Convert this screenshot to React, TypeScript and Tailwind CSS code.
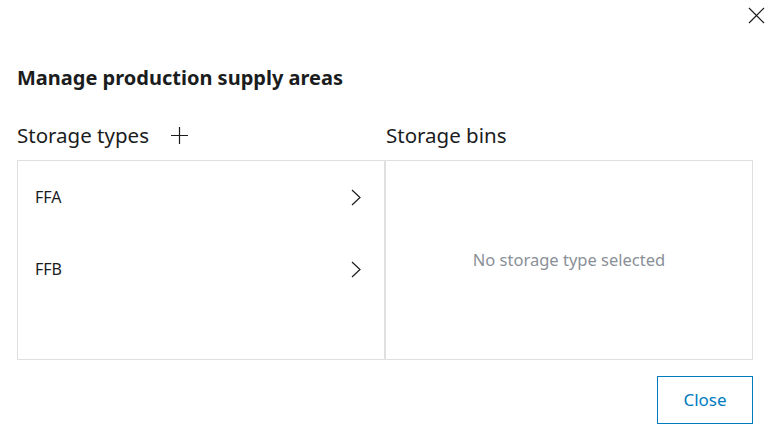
const storageTypes = ['FFA', 'FFB'];

/** Thin chevron used in the storage type rows. */
function Chevron() {
  return (
    <svg width="10" height="17" viewBox="0 0 10 17" fill="none" stroke="currentColor" strokeWidth="1.2">
      <path d="M1 1 L9 8.5 L1 16" />
    </svg>
  );
}

/** Dialog for managing production supply areas. */
export default function App() {
  return (
    <div
      className="relative w-[773px] h-[436px] bg-white px-[17px] text-[#1a1c1d]"
      style={{ fontFamily: '"Noto Sans", "Open Sans", sans-serif' }}
    >
      {/* Close icon */}
      <button className="absolute left-[748px] top-[7px] text-[#1a1c1d]" aria-label="Close dialog">
        <svg width="17" height="17" viewBox="0 0 17 17" fill="none" stroke="currentColor" strokeWidth="1.2">
          <path d="M1 1 L16 16 M16 1 L1 16" />
        </svg>
      </button>

      {/* Title */}
      <h1 className="pt-[64px] text-[20px] leading-[28px] font-bold">Manage production supply areas</h1>

      {/* Column headers */}
      <div className="mt-[28px] grid grid-cols-[369px_1fr] w-[736px]">
        <div className="flex items-center gap-[22px] h-[30px]">
          <span className="text-[20.5px] leading-[28px]">Storage types</span>
          <svg width="17" height="17" viewBox="0 0 17 17" fill="none" stroke="currentColor" strokeWidth="1.2">
            <path d="M8.5 0 V17 M0 8.5 H17" />
          </svg>
        </div>
        <div className="flex items-center h-[30px]">
          <span className="text-[20.5px] leading-[28px]">Storage bins</span>
        </div>
      </div>

      {/* Panels */}
      <div className="mt-[10px] grid grid-cols-[368px_1fr] w-[736px] h-[200px] border border-[#e0e0e3]">
        <div className="border-r-2 border-[#e0e0e3] flex flex-col">
          {storageTypes.map((t) => (
            <div key={t} className="flex items-center justify-between h-[72px] pl-[17px] pr-[23px]">
              <span className="text-[16px]">{t}</span>
              <Chevron />
            </div>
          ))}
        </div>
        <div className="flex items-center justify-center">
          <span className="text-[16.5px] text-[#8a9097]">No storage type selected</span>
        </div>
      </div>

      {/* Footer */}
      <div className="mt-[16px] flex justify-end w-[736px]">
        <button className="w-[96px] h-[48px] border border-[#007bc0] text-[#007bc0] text-[17px]">
          Close
        </button>
      </div>
    </div>
  );
}
